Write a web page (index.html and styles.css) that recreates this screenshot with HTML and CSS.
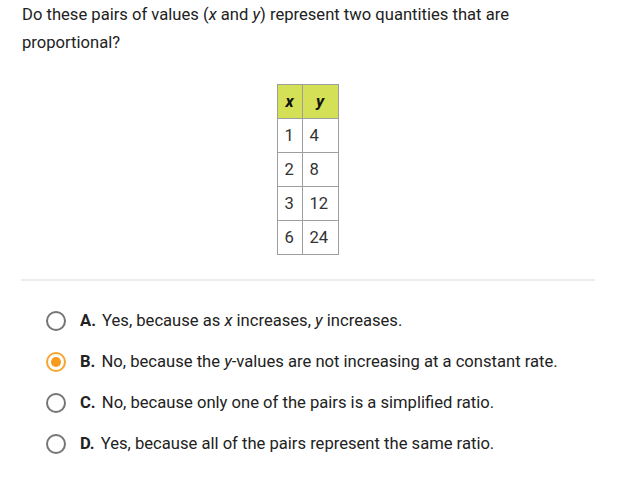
FILE: index.html
```html
<!DOCTYPE html>
<html>
<head>
<meta charset="utf-8">
<link rel="stylesheet" href="styles.css">
</head>
<body>
<div class="page">
  <p class="question">Do these pairs of values (<i>x</i> and <i>y</i>) represent two quantities that are proportional?</p>
  <div class="table-wrap">
    <table class="data">
      <thead><tr><th class="c1"><i>x</i></th><th class="c2"><i>y</i></th></tr></thead>
      <tbody>
        <tr><td>1</td><td>4</td></tr>
        <tr><td>2</td><td>8</td></tr>
        <tr><td>3</td><td>12</td></tr>
        <tr><td>6</td><td>24</td></tr>
      </tbody>
    </table>
  </div>
  <hr class="divider">
  <ul class="options">
    <li class="option"><span class="radio"></span><span class="text"><b>A.</b> Yes, because as <i>x</i> increases, <i>y</i> increases.</span></li>
    <li class="option selected"><span class="radio"><span class="dot"></span></span><span class="text"><b>B.</b> No, because the <i>y</i>-values are not increasing at a constant rate.</span></li>
    <li class="option"><span class="radio"></span><span class="text"><b>C.</b> No, because only one of the pairs is a simplified ratio.</span></li>
    <li class="option"><span class="radio"></span><span class="text"><b>D.</b> Yes, because all of the pairs represent the same ratio.</span></li>
  </ul>
</div>
</body>
</html>
```
FILE: styles.css
```css
html, body { margin: 0; padding: 0; background: #fff; }
body { font-family: Roboto, "Noto Sans", sans-serif; font-size: 16.6px; color: #222; }
.page { padding: 1px 0 0 22px; width: 574px; }
.question { margin: 0; line-height: 28px; width: 530px; }
.table-wrap { display: flex; justify-content: center; margin-top: 27px; padding-left: 0; padding-right: 3px; }
.data { border-collapse: collapse; font-size: 16.6px; }
.data th, .data td { border: 1px solid #9e9e9e; height: 33px; padding: 0 7px; text-align: left; color: #333; }
.data th { background: #d4e157; color: #111; font-weight: bold; text-align: center; }
.data th.c1 { width: 10px; }
.data th.c2 { width: 21px; }
.divider { border: 0; height: 2px; background: #ececec; margin: 24px 0 0 -1px; width: 574px; }
.options { list-style: none; margin: 19px 0 0 0; padding: 0; }
.option { display: flex; align-items: center; height: 41px; }
.radio { box-sizing: border-box; width: 20px; height: 20px; border: 2px solid #757575; border-radius: 50%; margin-left: 24px; margin-right: 14px; position: relative; display: flex; align-items: center; justify-content: center; flex: none; }
.selected .radio { border-color: #f7a531; }
.selected .radio::before { content: ""; position: absolute; left: -12px; top: -12px; width: 40px; height: 40px; border-radius: 50%; background: #fef1e0; z-index: -1; }
.dot { width: 10px; height: 10px; border-radius: 50%; background: #f89a1c; }
.text b { font-weight: bold; margin-right: 2px; }
```
